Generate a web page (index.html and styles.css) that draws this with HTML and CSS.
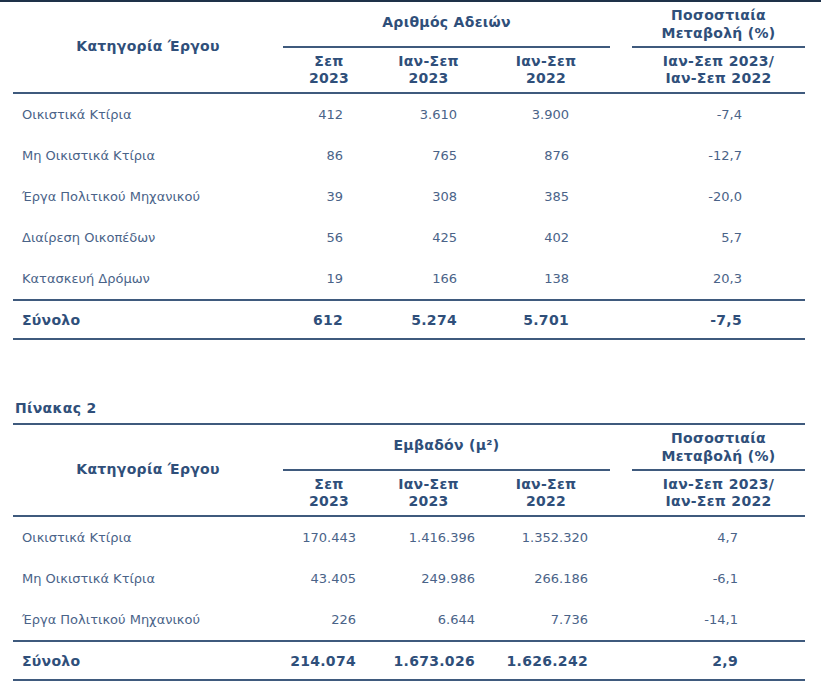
FILE: index.html
```html
<!DOCTYPE html>
<html lang="el">
<head>
<meta charset="utf-8">
<title>Άδειες Οικοδομής</title>
<link rel="stylesheet" href="styles.css">
</head>
<body>
<div class="top-rule"></div>
<section class="tbl t1">
  <div class="head">
    <div class="h-cat">Κατηγορία Έργου</div>
    <div class="h-group">Αριθμός Αδειών</div>
    <div class="h-pct">Ποσοστιαία<br>Μεταβολή (%)</div>
    <div class="h-sub c2">Σεπ<br>2023</div>
    <div class="h-sub c3">Ιαν-Σεπ<br>2023</div>
    <div class="h-sub c4">Ιαν-Σεπ<br>2022</div>
    <div class="h-sub c6">Ιαν-Σεπ 2023/<br>Ιαν-Σεπ 2022</div>
  </div>
  <div class="row"><div class="lbl">Οικιστικά Κτίρια</div><div class="v c2">412</div><div class="v c3">3.610</div><div class="v c4">3.900</div><div class="v c6">-7,4</div></div>
  <div class="row"><div class="lbl">Μη Οικιστικά Κτίρια</div><div class="v c2">86</div><div class="v c3">765</div><div class="v c4">876</div><div class="v c6">-12,7</div></div>
  <div class="row"><div class="lbl">Έργα Πολιτικού Μηχανικού</div><div class="v c2">39</div><div class="v c3">308</div><div class="v c4">385</div><div class="v c6">-20,0</div></div>
  <div class="row"><div class="lbl">Διαίρεση Οικοπέδων</div><div class="v c2">56</div><div class="v c3">425</div><div class="v c4">402</div><div class="v c6">5,7</div></div>
  <div class="row"><div class="lbl">Κατασκευή Δρόμων</div><div class="v c2">19</div><div class="v c3">166</div><div class="v c4">138</div><div class="v c6">20,3</div></div>
  <div class="row total"><div class="lbl">Σύνολο</div><div class="v c2">612</div><div class="v c3">5.274</div><div class="v c4">5.701</div><div class="v c6">-7,5</div></div>
</section>

<h2 class="caption">Πίνακας 2</h2>
<section class="tbl t2">
  <div class="head bordered">
    <div class="h-cat">Κατηγορία Έργου</div>
    <div class="h-group">Εμβαδόν (μ²)</div>
    <div class="h-pct">Ποσοστιαία<br>Μεταβολή (%)</div>
    <div class="h-sub c2">Σεπ<br>2023</div>
    <div class="h-sub c3">Ιαν-Σεπ<br>2023</div>
    <div class="h-sub c4">Ιαν-Σεπ<br>2022</div>
    <div class="h-sub c6">Ιαν-Σεπ 2023/<br>Ιαν-Σεπ 2022</div>
  </div>
  <div class="row"><div class="lbl">Οικιστικά Κτίρια</div><div class="v c2">170.443</div><div class="v c3">1.416.396</div><div class="v c4">1.352.320</div><div class="v c6">4,7</div></div>
  <div class="row"><div class="lbl">Μη Οικιστικά Κτίρια</div><div class="v c2">43.405</div><div class="v c3">249.986</div><div class="v c4">266.186</div><div class="v c6">-6,1</div></div>
  <div class="row"><div class="lbl">Έργα Πολιτικού Μηχανικού</div><div class="v c2">226</div><div class="v c3">6.644</div><div class="v c4">7.736</div><div class="v c6">-14,1</div></div>
  <div class="row total"><div class="lbl">Σύνολο</div><div class="v c2">214.074</div><div class="v c3">1.673.026</div><div class="v c4">1.626.242</div><div class="v c6">2,9</div></div>
</section>
</body>
</html>
```

FILE: styles.css
```css
* { box-sizing: border-box; }
html, body { margin: 0; padding: 0; background: #ffffff; }
body {
  font-family: "DejaVu Sans", Verdana, sans-serif;
  font-size: 13px;
  color: #4a6388;
  width: 821px;
}
.top-rule {
  height: 2px;
  background: #1e3148;
}
.tbl {
  margin-left: 13px;
  width: 792px;
}
.head, .row {
  display: grid;
  grid-template-columns: 270px 92px 107px 128px 22px 173px;
}
.head {
  grid-template-rows: 46px 44px;
  border-bottom: 2px solid #3f5a7d;
  color: #2f4f7a;
  font-weight: bold;
  font-size: 14px;
  letter-spacing: 0.3px;
  line-height: 17px;
}
.head.bordered { border-top: 2px solid #3f5a7d; }
.h-cat {
  grid-column: 1;
  grid-row: 1 / 3;
  display: flex;
  align-items: center;
  justify-content: center;
  padding-bottom: 2px;
}
.h-group {
  grid-column: 2 / 5;
  grid-row: 1;
  display: flex;
  align-items: center;
  justify-content: center;
  border-bottom: 2px solid #3f5a7d;
  padding-bottom: 4px;
}
.h-pct {
  grid-column: 6;
  grid-row: 1;
  display: flex;
  align-items: center;
  justify-content: center;
  text-align: center;
  border-bottom: 2px solid #3f5a7d;
  line-height: 18px;
}
.h-sub {
  grid-row: 2;
  display: flex;
  align-items: center;
  justify-content: center;
  text-align: center;
}
.c2 { grid-column: 2; }
.c3 { grid-column: 3; }
.c4 { grid-column: 4; }
.c6 { grid-column: 6; }
.row {
  height: 41px;
  align-items: center;
}
.lbl { padding-left: 9px; }
.v { text-align: right; }
.t1 .v.c2 { padding-right: 32px; }
.t1 .v.c3 { padding-right: 25px; }
.t1 .v.c4 { padding-right: 41px; }
.t1 .v.c6 { padding-right: 63px; }
.t2 .v.c2 { padding-right: 19px; }
.t2 .v.c3 { padding-right: 7px; }
.t2 .v.c4 { padding-right: 22px; }
.t2 .v.c6 { padding-right: 67px; }
.row.total {
  height: 41px;
  border-top: 2px solid #3f5a7d;
  border-bottom: 2px solid #3f5a7d;
  font-weight: bold;
  font-size: 14px;
  letter-spacing: 0.3px;
  color: #2f4f7a;
}
.caption {
  margin: 60px 0 7px 15px;
  font-size: 14px;
  letter-spacing: 0.3px;
  line-height: 16px;
  font-weight: bold;
  color: #2f4f7a;
}
```
